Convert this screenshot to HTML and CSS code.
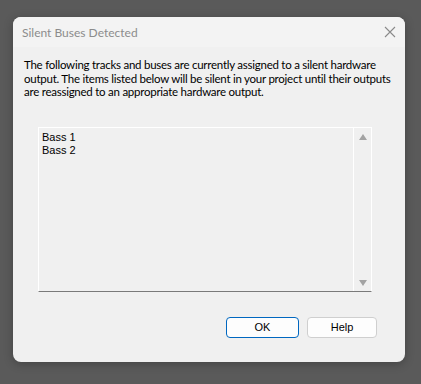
FILE: index.html
```html
<!DOCTYPE html>
<html>
<head>
<meta charset="utf-8">
<link rel="stylesheet" href="styles.css">
</head>
<body>
<div class="dialog">
  <div class="titlebar">
    <span class="title">Silent Buses Detected</span>
    <svg class="close" width="12" height="12" viewBox="0 0 12 12"><path d="M1 1 L11 11 M11 1 L1 11" stroke="#8a8a8a" stroke-width="1.1" fill="none"/></svg>
  </div>
  <div class="content">
    <p class="message">The following tracks and buses are currently assigned to a silent hardware<br>output. The items listed below will be silent in your project until their outputs<br>are reassigned to an appropriate hardware output.</p>
    <div class="listbox">
      <div class="items">
        <div class="item">Bass 1</div>
        <div class="item">Bass 2</div>
      </div>
      <div class="scrollbar">
        <span class="arrow up"></span>
        <span class="arrow down"></span>
      </div>
    </div>
    <div class="buttons">
      <button class="btn default">OK</button>
      <button class="btn help">Help</button>
    </div>
  </div>
</div>
</body>
</html>
```

FILE: styles.css
```css
html, body {
  margin: 0;
  padding: 0;
  background: #5a5a5a;
  width: 421px;
  height: 384px;
  overflow: hidden;
}
body {
  padding-top: 17px;
  padding-left: 13px;
  box-sizing: border-box;
}
.dialog {
  width: 392px;
  height: 345px;
  background: #f0f0f0;
  border-radius: 8px;
  overflow: hidden;
  display: flex;
  flex-direction: column;
  box-shadow: 0 2px 10px rgba(0,0,0,0.25);
}
.titlebar {
  height: 30px;
  background: #f3f3f3;
  display: flex;
  align-items: center;
  justify-content: space-between;
  padding: 0 9px 0 9px;
  flex: none;
}
.title {
  font-family: Lato, "Noto Sans", sans-serif;
  font-size: 12px;
  color: #8c8c8c;
  margin-top: 1px;
}
.close {
  margin-right: 0;
  margin-top: 0;
}
.content {
  flex: 1;
  display: flex;
  flex-direction: column;
  padding: 0 0 0 11px;
}
.message {
  margin: 11px 0 0 0;
  font-family: Lato, "Noto Sans", sans-serif;
  font-size: 11.5px;
  letter-spacing: -0.25px;
  line-height: 13.6px;
  color: #000;
  white-space: nowrap;
}
.listbox {
  margin: 28px 0 0 14px;
  width: 334px;
  height: 165px;
  box-sizing: border-box;
  border: 1px solid #ffffff;
  border-bottom: 1px solid #7a7a7a;
  display: flex;
  background: #f0f0f0;
}
.items {
  flex: 1;
  padding: 3px 0 0 3px;
  font-family: "Liberation Sans", Arial, sans-serif;
  font-size: 11px;
  line-height: 13px;
  color: #000;
}
.scrollbar {
  width: 17px;
  border-left: 1px solid #ffffff;
  display: flex;
  flex-direction: column;
  justify-content: space-between;
  align-items: center;
  padding: 6px 0 5px 0;
}
.arrow {
  width: 0;
  height: 0;
  border-left: 4px solid transparent;
  border-right: 4px solid transparent;
}
.arrow.up {
  border-bottom: 6px solid #a3a3a3;
}
.arrow.down {
  border-top: 6px solid #a3a3a3;
}
.buttons {
  display: flex;
  justify-content: flex-end;
  gap: 8px;
  margin: 25px 28px 0 0;
}
.btn {
  height: 21px;
  box-sizing: border-box;
  background: #fdfdfd;
  border: 1px solid #cfcfcf;
  border-radius: 4px;
  font-family: "Liberation Sans", Arial, sans-serif;
  font-size: 11px;
  line-height: 19px;
  color: #000;
  padding: 0;
}
.btn.default {
  width: 73px;
  border-color: #0067c0;
}
.btn.help {
  width: 70px;
}
```
